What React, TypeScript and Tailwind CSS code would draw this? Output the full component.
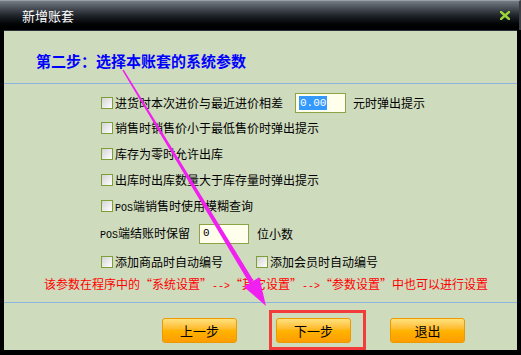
import React from "react";

const Box = () => (
  <span className="inline-block w-[12px] h-[12px] shrink-0 border border-[#7f9d39] bg-linear-to-br from-[#d4d4d4] to-white" />
);

const Btn = ({ label }: { label: string }) => (
  <div className="w-[75px] h-[25px] rounded-[3px] border border-[#eb9a00] bg-linear-to-b from-[#ffe27a] via-[#ffb400] to-[#ff9c00] flex items-center justify-center text-[13px] text-black">
    {label}
  </div>
);

const M = ({ children }: { children: React.ReactNode }) => (
  <span className="font-['Liberation_Mono',monospace] text-[10px]">{children}</span>
);

const LQ = () => <span className="inline-block w-[12px] text-right">“</span>;
const RQ = () => <span className="inline-block w-[12px] text-left">”</span>;

export default function App() {
  return (
    <div className="relative w-[521px] h-[355px] bg-black overflow-hidden font-['Noto_Sans_CJK_SC','Noto_Sans',sans-serif] text-[12px] text-black">
      {/* title bar */}
      <div className="h-[30px] flex items-center justify-between border-t border-[#9aa0a8] border-r-2 border-r-[#3a3e44] bg-linear-to-b from-[#767c84] via-[#20252c] to-black">
        <span className="pl-[22px] text-[13px] text-white leading-none">新增账套</span>
        <svg width="10" height="9" viewBox="0 0 10 9" className="mr-[9px]">
          <path d="M1 1 L9 8 M9 1 L1 8" stroke="#9bd33a" strokeWidth="2.4" strokeLinecap="square" />
        </svg>
      </div>
      {/* body */}
      <div className="ml-[4px] w-[513px] h-[320px] bg-[#cfdbbd] border-t border-[#2a3038] flex flex-col">
        <div className="pt-[19px] pl-[32px] h-[41px] text-[15px] font-bold text-[#0000ff] leading-[22px]">
          第二步：选择本账套的系统参数
        </div>
        <div className="mt-[11px] h-px bg-[#8db4dc]" />
        <div className="mt-[6px] pl-[97px] flex flex-col">
          <div className="h-[25px] flex items-center">
            <Box />
            <span className="ml-[2px]">进货时本次进价与最近进价相差</span>
            <div className="ml-[12px] w-[51px] h-[20px] border border-[#8ba446] bg-[#ffffec] flex items-center pl-[3px]">
              <span className="bg-[#3399ff] text-white leading-[14px] px-[1px] font-['Liberation_Mono',monospace] text-[11px]">0.00</span>
            </div>
            <span className="ml-[7px]">元时弹出提示</span>
          </div>
          <div className="h-[25px] flex items-center">
            <Box />
            <span className="ml-[2px]">销售时销售价小于最低售价时弹出提示</span>
          </div>
          <div className="h-[27px] flex items-center">
            <Box />
            <span className="ml-[2px]">库存为零时允许出库</span>
          </div>
          <div className="h-[25px] flex items-center">
            <Box />
            <span className="ml-[2px]">出库时出库数量大于库存量时弹出提示</span>
          </div>
          <div className="h-[28px] flex items-center">
            <Box />
            <span className="ml-[2px]"><M>POS</M>端销售时使用模糊查询</span>
          </div>
          <div className="h-[27px] flex items-center -ml-[1px]">
            <span><M>POS</M>端结账时保留</span>
            <div className="ml-[9px] w-[50px] h-[20px] border border-[#8ba446] bg-[#ffffec] flex items-center pl-[3px]">
              <span className="font-['Liberation_Mono',monospace] text-[11px]">0</span>
            </div>
            <span className="ml-[8px]">位小数</span>
          </div>
          <div className="h-[29px] flex items-center">
            <Box />
            <span className="ml-[2px] w-[141px]">添加商品时自动编号</span>
            <Box />
            <span className="ml-[2px]">添加会员时自动编号</span>
          </div>
        </div>
        <div className="h-[16px] pl-[40px] flex items-center text-[#ff0000] whitespace-nowrap">
          <span>
            该参数在程序中的<LQ />系统设置<RQ /><M>--&gt;</M><LQ />其它设置<RQ /><M>--&gt;</M><LQ />参数设置<RQ />中也可以进行设置
          </span>
        </div>
        <div className="mt-[10px] h-px bg-[#8db4dc]" />
        <div className="mt-[15px] pl-[158px] flex gap-[39px]">
          <Btn label="上一步" />
          <Btn label="下一步" />
          <Btn label="退出" />
        </div>
      </div>

      {/* annotation: red box */}
      <div className="absolute left-[269px] top-[310px] w-[97px] h-[40px] border-[3px] border-[#f23c3c]" />
      {/* annotation: magenta arrow */}
      <svg className="absolute left-0 top-0 pointer-events-none" width="521" height="355" viewBox="0 0 521 355">
        <polygon points="122.4,70.4 123.6,69.6 253.6,280.7 249.4,283.3" fill="#f020f0" />
        <polygon points="266,306 243.8,286.7 259.2,277.3" fill="#f020f0" />
      </svg>
    </div>
  );
}
